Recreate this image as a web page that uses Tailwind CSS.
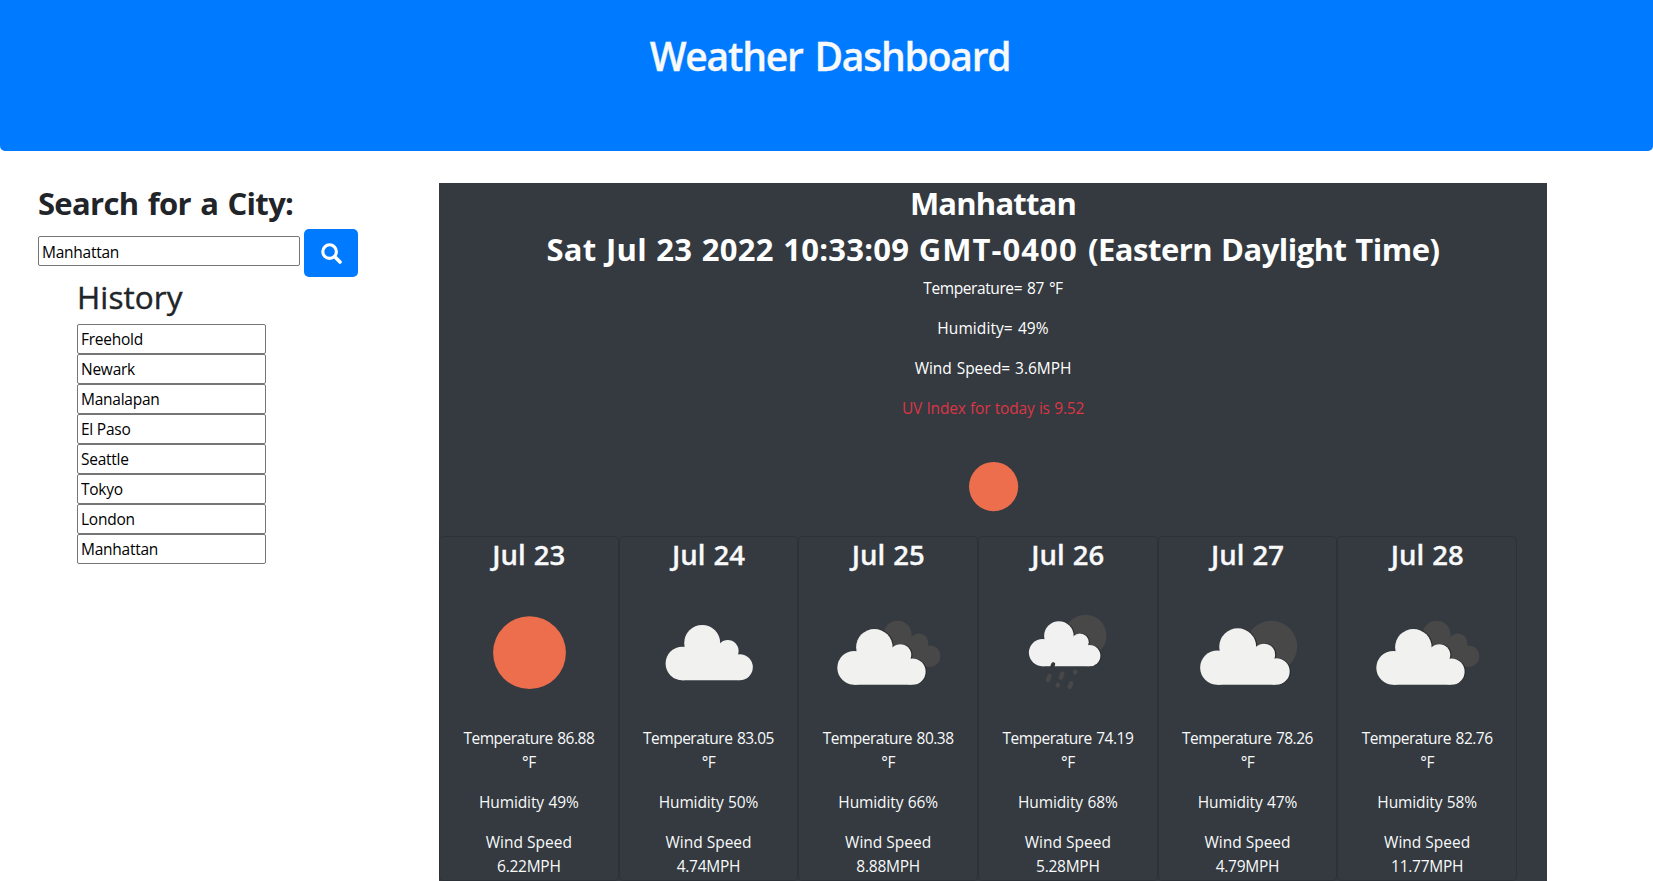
<!DOCTYPE html>
<html lang="en">
<head>
<meta charset="utf-8">
<title>Weather Dashboard</title>
<script src="https://cdn.jsdelivr.net/npm/@tailwindcss/browser@4"></script>
</head>
<body class="h-[881px] overflow-hidden bg-white font-['Open_Sans',sans-serif] text-[15.5px] leading-6 text-[#212529]">
<svg class="hidden">
  <symbol id="cloud" viewBox="0 0 148 148" overflow="visible">
    <circle cx="47.4" cy="85.5" r="16.8"/><circle cx="67.2" cy="65" r="18"/><circle cx="92.8" cy="72.8" r="10.8"/><circle cx="104.8" cy="89.3" r="13"/>
    <path d="M47 102.3V80L67 65L93 73L104 85V102.3Z"/>
  </symbol>
  <symbol id="broken" viewBox="0 0 148 148" overflow="visible">
    <g fill="#484848"><circle cx="82.8" cy="56.7" r="14"/><circle cx="104" cy="65" r="9.6"/><circle cx="114.7" cy="78.2" r="10.8"/><path d="M75 65L95 58L110 72L112 89H85Z"/></g>
    <use href="#cloud" width="148" height="148" transform="translate(-7.3 3.1) scale(1.013)" fill="#2b2c2f"/>
    <use href="#cloud" width="148" height="148" transform="translate(-8.5 3.7) scale(1.013 1.007)" fill="#f1f1ef"/>
  </symbol>
</svg>

<header class="h-[151px] rounded-b-[5px] bg-[#007bff] pt-8 pl-[7px] text-center">
  <h1 class="text-[39px] leading-[48px] font-semibold tracking-[-1.22px] text-[#f8f9fa] [word-spacing:3px] [-webkit-text-stroke:0.3px_#f8f9fa]">Weather Dashboard</h1>
</header>

<div class="mt-8 flex">
  <aside class="w-[439px] shrink-0 pl-[38px]">
    <h2 class="text-[31px] leading-10 font-bold tracking-[-0.7px] [word-spacing:2px]">Search for a City:</h2>
    <div class="mt-[6px] flex">
      <input class="mt-[7px] h-[30px] w-[262px] rounded-[2px] border border-[#767676] bg-white px-[3px] pt-[1px] tracking-[-0.25px] text-black" value="Manhattan">
      <button class="ml-1 flex h-12 w-[54px] items-start rounded-[5px] bg-[#007bff] pt-[14px] pl-[17px]" aria-label="Search">
        <svg class="size-[21px]" viewBox="0 0 21 21" fill="none" stroke="#fff" stroke-linecap="round"><circle cx="8.6" cy="8.6" r="6.8" stroke-width="3.1"/><path d="M13.8 13.8L19 19" stroke-width="3.6"/></svg>
      </button>
    </div>
    <div class="pl-[39px]">
      <h2 class="mb-[7px] text-[31.5px] leading-10 font-medium tracking-[0.1px] [-webkit-text-stroke:0.4px_#212529]">History</h2>
      <div id="history" class="flex flex-col"></div>
    </div>
  </aside>

  <main class="h-[698px] w-[1108px] bg-[#343a40] text-center text-white">
    <h2 class="mb-[6px] text-[31px] leading-10 font-bold tracking-[-0.8px]">Manhattan</h2>
    <h2 class="mb-[7px] text-[31px] leading-10 font-bold tracking-[-0.5px] [word-spacing:1.2px]"><span class="tracking-[0.25px]">Sat Jul 23 2022 10:33:09 </span><span class="tracking-[1.05px]">GMT-0400 </span>(Eastern Daylight Time)</h2>
    <p class="mb-4 tracking-[-0.4px] [word-spacing:1.3px]">Temperature= 87 °F</p>
    <p class="mb-4 tracking-[0.08px] [word-spacing:1px]">Humidity= 49%</p>
    <p class="mb-4 tracking-[-0.05px] [word-spacing:1px]">Wind Speed= 3.6MPH</p>
    <p class="mb-4 tracking-[-0.2px] [word-spacing:0.6px] text-[#dc3545]">UV Index for today is 9.52</p>
    <svg class="mx-auto block size-[100px]" viewBox="0 0 100 100"><circle cx="50.6" cy="50.6" r="24.6" fill="#ec6e4c"/></svg>
    <div id="forecast" class="grid w-[1078px] grid-cols-6 text-[#f8f9fa]"></div>
  </main>
</div>

<script>
const cities = ["Freehold", "Newark", "Manalapan", "El Paso", "Seattle", "Tokyo", "London", "Manhattan"];
document.getElementById("history").innerHTML = cities.map(c =>
  `<input class="h-[30px] w-[189px] rounded-[2px] border border-[#767676] bg-white px-[3px] tracking-[-0.25px] text-black" value="${c}">`).join("");

const sun = `<circle cx="74.5" cy="74.7" r="36.4" fill="#ec6e4c"/>`;
const cloudy = `<use href="#cloud" width="148" height="148" fill="#f1f1ef"/>`;
const broken = `<use href="#broken" x="0.8" width="148" height="148"/>`;
const rain = `<circle cx="91.5" cy="57.7" r="21" fill="#484848"/>
  <use href="#cloud" width="148" height="148" transform="translate(10.9 4.4) scale(.82)" fill="#2b2c2f"/>
  <use href="#cloud" width="148" height="148" transform="translate(9.8 5) scale(.82 .814)" fill="#f1f1f2"/>
  <path d="M58.3 88.5L59.2 86.2" stroke="#333537" stroke-width="4" stroke-linecap="round"/>
  <path d="M54 102L55.6 98M66.8 99.8L68.3 95.6M81 94.4L81.3 93.6M63.7 107.4L64 106.7M75.7 109L77.3 105.2" stroke="#484848" stroke-width="4.4" stroke-linecap="round"/>`;
const partly = `<circle cx="97.4" cy="68.5" r="25.8" fill="#484848"/>
  <use href="#cloud" width="148" height="148" transform="translate(-4.1 1.7) scale(1.027)" fill="#2b2c2f"/>
  <use href="#cloud" width="148" height="148" transform="translate(-5.3 2.4) scale(1.027 1.02)" fill="#f1f1ef"/>`;

const days = [
  ["Jul 23", sun, "86.88", "49", "6.22"],
  ["Jul 24", cloudy, "83.05", "50", "4.74"],
  ["Jul 25", broken, "80.38", "66", "8.88"],
  ["Jul 26", rain, "74.19", "68", "5.28"],
  ["Jul 27", partly, "78.26", "47", "4.79"],
  ["Jul 28", broken, "82.76", "58", "11.77"]
];
document.getElementById("forecast").innerHTML = days.map(([d, icon, t, h, w]) => `
  <section class="h-[345px] rounded-[4px] border border-black/12 px-[15px]">
    <h3 class="mb-[6px] text-[27.5px] leading-[35px] font-semibold [word-spacing:1px] [-webkit-text-stroke:0.3px_#f8f9fa]">${d}</h3>
    <svg class="block h-[148px] w-[148px]" viewBox="0 0 148 148">${icon}</svg>
    <p class="mb-4 tracking-[-0.5px] [word-spacing:1px]">Temperature ${t}<br>°F</p>
    <p class="mb-4 tracking-[-0.12px] [word-spacing:0.6px]">Humidity ${h}%</p>
    <p>Wind Speed<br><span class="tracking-[-0.25px]">${w}MPH</span></p>
  </section>`).join("");
</script>
</body>
</html>
